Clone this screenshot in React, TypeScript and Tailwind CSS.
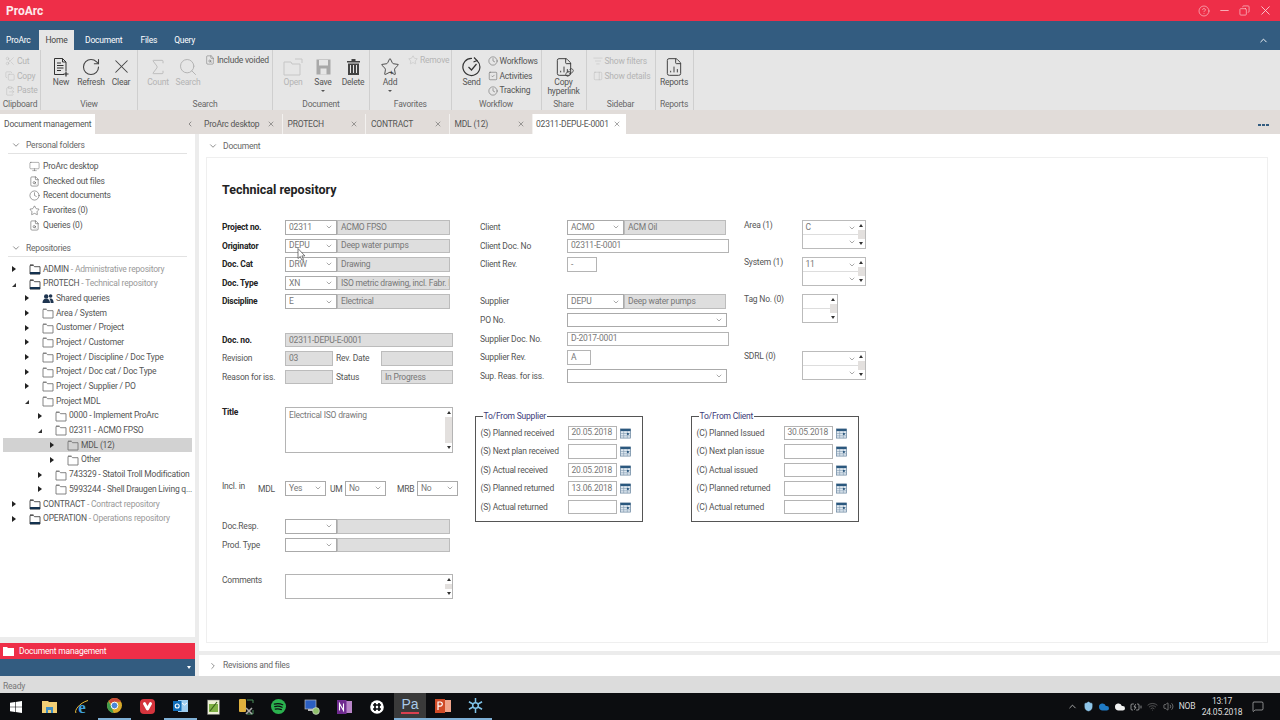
import type { ReactNode } from "react";
import {
  Scissors, Copy, ClipboardPaste, RotateCw, X, Sigma, Search,
  ChevronDown, ChevronRight, ChevronUp, ChevronLeft, Minus, CircleHelp, SquareCheck, Monitor,
  FileSearch, Clock, Link, ListFilter, PanelRight, FileChartColumn, Star,
  Wifi, Volume2, MessageSquare, Cloud, BatteryCharging, Shield,
} from "lucide-react";

function Group({ className, label, children }: { className: string; label: string; children: ReactNode }) {
  return (
    <div className={`flex h-full shrink-0 flex-col border-r border-[#cfcfcf] ${className}`}>
      <div className="flex flex-1 items-start">{children}</div>
      <div className="h-[11px] whitespace-nowrap text-center text-[8.5px] leading-[10px] text-[#666]">{label}</div>
    </div>
  );
}

function BigBtn({ icon, label, off, arrow }: { icon: ReactNode; label: string; off?: boolean; arrow?: boolean }) {
  return (
    <div className={`flex w-[30px] shrink-0 flex-col items-center pt-[6px] text-[8.5px] leading-[9px] ${off ? "text-[#b4b4b4]" : "text-[#555]"}`}>
      <div className="flex h-[21px] items-center justify-center">{icon}</div>
      <div className="mt-[1px] whitespace-nowrap">{label}</div>
      {arrow && <div className="mt-[3px] h-0 w-0 border-x-[2px] border-t-[2px] border-x-transparent border-t-[#555]" />}
    </div>
  );
}

function SmallBtn({ icon, label, off }: { icon: ReactNode; label: string; off?: boolean }) {
  return (
    <div className={`flex h-[14.7px] items-center gap-[2px] whitespace-nowrap text-[8.5px] ${off ? "text-[#b4b4b4]" : "text-[#555]"}`}>
      {icon}
      {label}
    </div>
  );
}

function FolderIcon({ repo }: { repo?: boolean }) {
  return (
    <svg width="12" height="12" viewBox="0 0 12 12" className="shrink-0">
      <path d="M1 2.5h3.5l1 1.2H11V11H1z" fill="none" stroke={repo ? "#444" : "#777"} strokeWidth="0.9" />
      <path d="M1 1.5h3.5" stroke={repo ? "#444" : "#999"} strokeWidth="0.6" />
      {repo && <rect x="1" y="9" width="10" height="2.2" fill="#14324f" />}
    </svg>
  );
}

function UsersIcon() {
  return (
    <svg width="12" height="11" viewBox="0 0 12 11" fill="#1f3550">
      <circle cx="4.2" cy="3.4" r="2.2" />
      <circle cx="8.6" cy="3" r="1.8" />
      <path d="M0.5 10c0-3 1.5-4.5 3.7-4.5S8 7 8 10zM8.6 10h3c0-2.8-1-4.5-3-4.5-.5 0-.9.1-1.3.3 1 .9 1.3 2.4 1.3 4.2z" />
    </svg>
  );
}

const trees1 = [
  { label: "ProArc desktop", icon: <Monitor size={11} strokeWidth={1} color="#555" /> },
  { label: "Checked out files", icon: <FileSearch size={11} strokeWidth={1.1} color="#444" /> },
  { label: "Recent documents", icon: <Clock size={11} strokeWidth={1.1} color="#444" /> },
  { label: "Favorites (0)", icon: <Star size={11} strokeWidth={1.1} color="#444" /> },
  { label: "Queries (0)", icon: <FileSearch size={11} strokeWidth={1.1} color="#444" /> },
];

type Node = { lv: 0 | 1 | 2 | 3; open?: boolean; label: string; sub?: string; sel?: boolean; users?: boolean };

const repoTree: Node[] = [
  { lv: 0, label: "ADMIN", sub: " - Administrative repository" },
  { lv: 0, open: true, label: "PROTECH", sub: " - Technical repository" },
  { lv: 1, label: "Shared queries", users: true },
  { lv: 1, label: "Area / System" },
  { lv: 1, label: "Customer / Project" },
  { lv: 1, label: "Project / Customer" },
  { lv: 1, label: "Project / Discipline / Doc Type" },
  { lv: 1, label: "Project / Doc cat / Doc Type" },
  { lv: 1, label: "Project / Supplier / PO" },
  { lv: 1, open: true, label: "Project MDL" },
  { lv: 2, label: "0000 - Implement ProArc" },
  { lv: 2, open: true, label: "02311 - ACMO FPSO" },
  { lv: 3, label: "MDL (12)", sel: true },
  { lv: 3, label: "Other" },
  { lv: 2, label: "743329 - Statoil Troll Modification" },
  { lv: 2, label: "5993244 - Shell Draugen Living q..." },
  { lv: 0, label: "CONTRACT", sub: " - Contract repository" },
  { lv: 0, label: "OPERATION", sub: " - Operations repository" },
];

const indent = ["pl-[12px]", "pl-[25px]", "pl-[38px]", "pl-[50px]"];

function TreeRow({ node }: { node: Node }) {
  return (
    <div className={`flex h-[14.7px] items-center whitespace-nowrap text-[8.5px] text-[#555] ${indent[node.lv]} ${node.sel ? "mx-[3px] bg-[#d2d2d2]" : ""}`}>
      <span className={`flex w-[17px] shrink-0 ${node.sel ? "-ml-[3px]" : ""}`}>
        {node.open ? (
          <span className="mt-[2px] h-0 w-0 border-b-[4px] border-l-[4px] border-b-[#333] border-l-transparent" />
        ) : (
          <span className="h-0 w-0 border-y-[3px] border-l-[4px] border-y-transparent border-l-[#222]" />
        )}
      </span>
      <span className="mr-[2px] flex w-[12px] shrink-0">
        {node.users ? <UsersIcon /> : <FolderIcon repo={node.lv === 0} />}
      </span>
      <span>{node.label}</span>
      {node.sub && <span className="whitespace-pre text-[#999]">{node.sub}</span>}
    </div>
  );
}

function SectionHead({ label }: { label: string }) {
  return (
    <div className="mx-[8px] flex h-[20px] items-center gap-[5px] border-b border-[#e2e2e2] pl-[3px] pt-[3px] text-[8.5px] text-[#666]">
      <ChevronDown size={10} strokeWidth={1.4} color="#444" />
      {label}
    </div>
  );
}

function Sidebar() {
  return (
    <div className="flex w-[195px] shrink-0 flex-col bg-white">
      <SectionHead label="Personal folders" />
      <div className="flex-col pt-[5px]">
        {trees1.map((t) => (
          <div key={t.label} className="flex h-[14.7px] items-center gap-[3px] pl-[29px] text-[8.5px] text-[#555]">
            <span className="flex w-[11px] shrink-0">{t.icon}</span>
            {t.label}
          </div>
        ))}
      </div>
      <div className="h-[4.5px]" />
      <SectionHead label="Repositories" />
      <div className="flex-1 pt-[4.6px]">
        {repoTree.map((n) => (
          <TreeRow key={n.label} node={n} />
        ))}
      </div>
      <div className="h-[6px] bg-[#ececec]" />
      <div className="flex h-[16px] items-center gap-[5px] bg-[#ee2e48] pl-[3px] text-[8.5px] text-white">
        <svg width="11" height="9" viewBox="0 0 11 9"><path d="M0 0h4l1 1h6v8H0z" fill="#fff" /></svg>
        Document management
      </div>
      <div className="flex h-[17px] items-center justify-end bg-[#335c80] pr-[4px]">
        <span className="h-0 w-0 border-x-[2.5px] border-t-[3px] border-x-transparent border-t-white" />
      </div>
    </div>
  );
}

function Combo({ value, className }: { value?: string; className: string }) {
  return (
    <div className={`flex h-[14.5px] shrink-0 items-center justify-between border border-[#aaa] bg-white pl-[3px] pr-[3px] text-[8.5px] text-[#777] ${className}`}>
      <span>{value}</span>
      <ChevronDown size={8} strokeWidth={1.5} color="#555" />
    </div>
  );
}

function GrayBox({ value, className }: { value?: string; className: string }) {
  return (
    <div className={`flex h-[14.5px] shrink-0 items-center overflow-hidden whitespace-nowrap border border-[#bcbcbc] bg-[#dedede] pl-[3px] text-[8.5px] text-[#777] ${className}`}>
      {value}
    </div>
  );
}

function TextBox({ value, className }: { value?: string; className: string }) {
  return (
    <div className={`flex h-[14.5px] shrink-0 items-center border border-[#b4b4b4] bg-white pl-[3px] text-[8.5px] text-[#777] ${className}`}>
      {value}
    </div>
  );
}

function Label({ children, bold, className = "w-[63px]" }: { children: ReactNode; bold?: boolean; className?: string }) {
  return (
    <div className={`shrink-0 whitespace-nowrap text-[8.5px] leading-[14px] ${bold ? "font-bold text-[#222]" : "text-[#555]"} ${className}`}>
      {children}
    </div>
  );
}

function Row({ children }: { children: ReactNode }) {
  return <div className="flex h-[18.6px] items-start">{children}</div>;
}

function Spin() {
  return (
    <div className="flex w-[7px] shrink-0 flex-col items-center justify-between bg-[#e3e0de]">
      <div className="flex h-[9px] w-full items-center justify-center bg-white">
        <span className="h-0 w-0 border-x-[2px] border-b-[3px] border-x-transparent border-b-[#333]" />
      </div>
      <div className="flex h-[9px] w-full items-center justify-center bg-white">
        <span className="h-0 w-0 border-x-[2px] border-t-[3px] border-x-transparent border-t-[#333]" />
      </div>
    </div>
  );
}

function ListBox({ value, label, plain, className }: { value?: string; label: string; plain?: boolean; className: string }) {
  return (
    <div className={`flex items-start ${className}`}>
      <Label className="w-[57.5px] -translate-y-[2px]">{label}</Label>
      <div className={`flex h-[29px] border border-[#bbb] bg-white ${plain ? "w-[36px]" : "w-[64px]"}`}>
        <div className="flex flex-1 flex-col text-[8.5px] text-[#777]">
          <div className="flex flex-1 items-center justify-between border-b border-[#ddd] pl-[3px] pr-[2px]">
            <span>{value}</span>
            {!plain && <ChevronDown size={8} strokeWidth={1.5} color="#555" />}
          </div>
          <div className="flex flex-1 items-center justify-end pr-[2px]">
            {!plain && <ChevronDown size={8} strokeWidth={1.5} color="#555" />}
          </div>
        </div>
        <Spin />
      </div>
    </div>
  );
}

function CalendarIcon() {
  return (
    <svg width="11" height="11" viewBox="0 0 12 11" className="shrink-0">
      <rect x="0.5" y="0.5" width="11" height="10" fill="#dfe8f0" stroke="#6c87a0" strokeWidth="0.8" />
      <rect x="0.5" y="0.5" width="11" height="2.4" fill="#2b587e" />
      <path d="M4 3v7.5M8 3v7.5M.5 5.5h11M.5 8h11" stroke="#7d97ad" strokeWidth="0.6" />
      <rect x="7.6" y="5" width="2" height="2" fill="#2b587e" />
    </svg>
  );
}

function DateGroup({ title, rows }: { title: string; rows: [string, string][] }) {
  return (
    <fieldset className="h-[110px] w-[168px] shrink-0 border border-[#555] pl-[4.5px]">
      <legend className="ml-[2px] px-[1px] text-[8.5px] leading-[9px] text-[#3d3a78]">{title}</legend>
      <div className="pt-[5px]">
        {rows.map(([label, value]) => (
          <div key={label} className="flex h-[18.6px] items-start">
            <Label className="w-[87px]">{label}</Label>
            <TextBox value={value} className="w-[49px]" />
            <span className="ml-[3.5px] mt-[2px] flex"><CalendarIcon /></span>
          </div>
        ))}
      </div>
    </fieldset>
  );
}

function Form() {
  return (
    <div className="flex pl-[15px]">
      <div className="w-[253px] shrink-0">
        <Row><Label bold>Project no.</Label><Combo value="02311" className="w-[52px]" /><GrayBox value="ACMO FPSO" className="w-[113px]" /></Row>
        <Row><Label bold>Originator</Label><Combo value="DEPU" className="w-[52px]" /><GrayBox value="Deep water pumps" className="w-[113px]" /></Row>
        <Row><Label bold>Doc. Cat</Label><Combo value="DRW" className="w-[52px]" /><GrayBox value="Drawing" className="w-[113px]" /></Row>
        <Row><Label bold>Doc. Type</Label><Combo value="XN" className="w-[52px]" /><GrayBox value="ISO metric drawing, incl. Fabr. I" className="w-[113px]" /></Row>
        <Row><Label bold>Discipline</Label><Combo value="E" className="w-[52px]" /><GrayBox value="Electrical" className="w-[113px]" /></Row>
        <div className="h-[19.7px]" />
        <Row><Label bold>Doc. no.</Label><GrayBox value="02311-DEPU-E-0001" className="w-[168px]" /></Row>
        <Row>
          <Label>Revision</Label>
          <GrayBox value="03" className="w-[48px]" />
          <Label className="w-[48px] pl-[3px]">Rev. Date</Label>
          <GrayBox className="w-[72px]" />
        </Row>
        <Row>
          <Label>Reason for iss.</Label>
          <GrayBox className="w-[48px]" />
          <Label className="w-[48px] pl-[3px]">Status</Label>
          <GrayBox value="In Progress" className="w-[72px]" />
        </Row>
        <div className="h-[18.2px]" />
        <div className="flex h-[46px] items-start">
          <Label bold className="w-[63px] -translate-y-[2px]">Title</Label>
          <div className="flex h-[46px] w-[168px] shrink-0 border border-[#b4b4b4] bg-white">
            <div className="flex-1 pl-[3px] pt-[1px] text-[8.5px] text-[#777]">Electrical ISO drawing</div>
            <Spin />
          </div>
        </div>
        <div className="flex h-[43px] items-end text-[8.5px]">
          <Label className="w-[36px] -translate-y-[3px]">Incl. in</Label>
          <Label className="w-[27px]">MDL</Label>
          <Combo value="Yes" className="w-[41px]" />
          <Label className="w-[19px] pl-[4px]">UM</Label>
          <Combo value="No" className="w-[41px]" />
          <Label className="w-[31px] pl-[11px]">MRB</Label>
          <Combo value="No" className="w-[41px]" />
        </div>
        <div className="h-[23.5px]" />
        <Row><Label>Doc.Resp.</Label><Combo className="w-[52px]" /><GrayBox className="w-[113px]" /></Row>
        <Row><Label>Prod. Type</Label><Combo className="w-[52px]" /><GrayBox className="w-[113px]" /></Row>
        <div className="h-[18px]" />
        <div className="flex items-start">
          <Label className="w-[63px] -translate-y-[1px]">Comments</Label>
          <div className="flex h-[25px] w-[168px] shrink-0 border border-[#b4b4b4] bg-white">
            <div className="flex-1" />
            <Spin />
          </div>
        </div>
      </div>
      <div className="flex flex-col">
        <div className="flex h-[168.5px]">
          <div className="w-[269px] shrink-0 pl-[5px]">
            <Row><Label className="w-[87px]">Client</Label><Combo value="ACMO" className="w-[57px]" /><GrayBox value="ACM Oil" className="w-[102px]" /></Row>
            <Row><Label className="w-[87px]">Client Doc. No</Label><TextBox value="02311-E-0001" className="w-[162px]" /></Row>
            <Row><Label className="w-[87px]">Client Rev.</Label><TextBox value="-" className="w-[30px]" /></Row>
            <div className="h-[18.6px]" />
            <Row><Label className="w-[87px]">Supplier</Label><Combo value="DEPU" className="w-[57px]" /><GrayBox value="Deep water pumps" className="w-[102px]" /></Row>
            <Row><Label className="w-[87px]">PO No.</Label><Combo className="w-[160px]" /></Row>
            <Row><Label className="w-[87px]">Supplier Doc. No.</Label><TextBox value="D-2017-0001" className="w-[162px]" /></Row>
            <Row><Label className="w-[87px]">Supplier Rev.</Label><TextBox value="A" className="w-[24px]" /></Row>
            <Row><Label className="w-[87px]">Sup. Reas. for iss.</Label><Combo className="w-[160px]" /></Row>
          </div>
          <div className="flex flex-col">
            <ListBox label="Area (1)" value="C" className="" />
            <ListBox label="System (1)" value="11" className="mt-[8px]" />
            <ListBox label="Tag No. (0)" plain className="mt-[8px]" />
            <ListBox label="SDRL (0)" className="mt-[28px]" />
          </div>
        </div>
        <div className="mt-[23px] flex gap-[48px]">
          <DateGroup
            title="To/From Supplier"
            rows={[
              ["(S) Planned received", "20.05.2018"],
              ["(S) Next plan received", ""],
              ["(S) Actual received", "20.05.2018"],
              ["(S) Planned returned", "13.06.2018"],
              ["(S) Actual returned", ""],
            ]}
          />
          <DateGroup
            title="To/From Client"
            rows={[
              ["(C) Planned Issued", "30.05.2018"],
              ["(C) Next plan issue", ""],
              ["(C) Actual issued", ""],
              ["(C) Planned returned", ""],
              ["(C) Actual returned", ""],
            ]}
          />
        </div>
      </div>
    </div>
  );
}

function Ribbon() {
  const big = 20;
  return (
    <div className="flex h-[60px] shrink-0 bg-[#e6e6e6]">
      <Group className="w-[41px]" label="Clipboard">
        <div className="pl-[5px] pt-[4px]">
          <SmallBtn off icon={<Scissors size={10} strokeWidth={1} />} label="Cut" />
          <SmallBtn off icon={<Copy size={10} strokeWidth={1} />} label="Copy" />
          <SmallBtn off icon={<ClipboardPaste size={10} strokeWidth={1} />} label="Paste" />
        </div>
      </Group>
      <Group className="w-[97px]" label="View">
        <div className="flex pl-[5px]">
          <BigBtn
            icon={
              <svg width="16" height="20" viewBox="0 0 16 20" fill="none" stroke="#333" strokeWidth="1">
                <path d="M11 17.5H1.5v-16h8l3.5 3.5v9" />
                <path d="M9.5 1.5V5H13M4 6h4M4 8.5h6.5M4 11h6.5M4 13.5h4" />
                <path d="M13 14.5v5M10.5 17h5" strokeWidth="1.2" />
              </svg>
            }
            label="New"
          />
          <BigBtn icon={<RotateCw size={big} strokeWidth={1.3} color="#444" />} label="Refresh" />
          <BigBtn icon={<X size={big + 3} strokeWidth={1.1} color="#444" />} label="Clear" />
        </div>
      </Group>
      <Group className="w-[135px]" label="Search">
        <div className="flex pl-[5px]">
          <BigBtn off icon={<Sigma size={big} strokeWidth={1} />} label="Count" />
          <BigBtn off icon={<Search size={big} strokeWidth={1.2} />} label="Search" />
          <div className="pl-[2px] pt-[3px]">
            <SmallBtn icon={<FileSearch size={10} strokeWidth={1} />} label="Include voided" />
          </div>
        </div>
      </Group>
      <Group className="w-[97px]" label="Document">
        <div className="flex pl-[5px]">
          <BigBtn off icon={<svg width="20" height="18" viewBox="0 0 20 18" fill="none" stroke="#c6c6c6" strokeWidth="1"><path d="M1 4h7l1 2h8v11H1zM12 1h7v4" /></svg>} label="Open" />
          <BigBtn
            icon={
              <svg width="15" height="16" viewBox="0 0 15 16">
                <rect x="0.5" y="0.5" width="14" height="15" fill="#a8a8a8" />
                <rect x="3" y="1" width="9" height="5.5" fill="#e6e6e6" />
                <rect x="4.5" y="9.5" width="6" height="6" fill="#e6e6e6" />
              </svg>
            }
            label="Save"
            arrow
          />
          <BigBtn
            icon={
              <svg width="13" height="16" viewBox="0 0 13 16">
                <path d="M0 2h13v1.5H0zM4.5 0h4v2h-4z" fill="#444" />
                <path d="M1 4.5h11V16H1z" fill="#444" />
                <path d="M3.5 6v8M6.5 6v8M9.5 6v8" stroke="#e6e6e6" strokeWidth="1" />
              </svg>
            }
            label="Delete"
          />
        </div>
      </Group>
      <Group className="w-[81.5px]" label="Favorites">
        <div className="flex pl-[5px]">
          <BigBtn
            icon={
              <span className="relative flex">
                <Star size={big} strokeWidth={1} color="#333" />
                <span className="absolute bottom-0 left-[9px] text-[8px] leading-[8px] text-[#333]">+</span>
              </span>
            }
            label="Add"
            arrow
          />
          <div className="pl-[3px] pt-[3px]">
            <SmallBtn off icon={<Star size={10} strokeWidth={1} />} label="Remove" />
          </div>
        </div>
      </Group>
      <Group className="w-[90px]" label="Workflow">
        <div className="flex pl-[5px]">
          <BigBtn
            icon={
              <svg width="20" height="20" viewBox="0 0 20 20" fill="none" stroke="#333" strokeWidth="1.2">
                <path d="M15 3.6A8.5 8.5 0 1 1 10 1.5" />
                <path d="M12 0.5l3 3-3.5 1.5" />
                <path d="M6.5 10l3 3 5-6" />
              </svg>
            }
            label="Send"
          />
          <div className="pl-[1px] pt-[4px]">
            <SmallBtn icon={<Clock size={10} strokeWidth={1.2} />} label="Workflows" />
            <SmallBtn icon={<SquareCheck size={10} strokeWidth={1.2} />} label="Activities" />
            <SmallBtn icon={<Clock size={10} strokeWidth={1.2} />} label="Tracking" />
          </div>
        </div>
      </Group>
      <Group className="w-[45px]" label="Share">
        <div className="flex w-full flex-col items-center pt-[6px] text-[8.5px] leading-[9px] text-[#555]">
          <div className="relative flex h-[21px] items-center">
            <FileChartColumn size={big} strokeWidth={1.1} color="#333" />
            <Link size={9} strokeWidth={2} color="#333" className="absolute bottom-0 right-0" />
          </div>
          <div className="mt-[1px] text-center">Copy<br />hyperlink</div>
        </div>
      </Group>
      <Group className="w-[69px]" label="Sidebar">
        <div className="pl-[6px] pt-[4px]">
          <SmallBtn off icon={<ListFilter size={10} strokeWidth={1} />} label="Show filters" />
          <SmallBtn off icon={<PanelRight size={10} strokeWidth={1} />} label="Show details" />
        </div>
      </Group>
      <Group className="w-[38px]" label="Reports">
        <div className="flex w-full justify-center">
          <BigBtn icon={<FileChartColumn size={big} strokeWidth={1.2} color="#444" />} label="Reports" />
        </div>
      </Group>
    </div>
  );
}

function DocTab({ label, active }: { label: string; active?: boolean }) {
  if (active) {
    return (
      <div className="mt-[4px] flex h-[20px] w-[93px] items-center justify-between bg-white pl-[3px] pr-[5px] text-[8.5px] text-[#555]">
        {label}
        <X size={8} strokeWidth={1.4} color="#444" />
      </div>
    );
  }
  return (
    <div className="mt-[4px] flex h-[20px] w-[83.5px] items-center justify-between border-r border-[#f3f1ef] pl-[5px] pr-[7px] text-[8.5px] text-[#555]">
      {label}
      <X size={8} strokeWidth={1.4} color="#444" />
    </div>
  );
}

function TaskCell({ children, bar, active }: { children: ReactNode; bar?: boolean; active?: boolean }) {
  return (
    <div className={`flex h-full w-[32.8px] shrink-0 items-center justify-center ${bar ? "border-b-2 border-[#7fb0d6]" : ""} ${active ? "bg-[#3a3a3a]" : ""}`}>
      {children}
    </div>
  );
}

function Taskbar() {
  return (
    <div className="flex h-[27px] shrink-0 items-center bg-[#0c0d10]">
      <TaskCell>
        <svg width="12" height="12" viewBox="0 0 12 12" fill="#fff"><path d="M0 1.7l5-.7v4.7H0zM5.6.9L12 0v5.7H5.6zM0 6.3h5V11l-5-.7zM5.6 6.3H12V12l-6.4-.9z" /></svg>
      </TaskCell>
      <TaskCell>
        <svg width="15" height="13" viewBox="0 0 15 13"><path d="M0 1h6l1 1h8v11H0z" fill="#f2cf75" /><rect x="4" y="7" width="7" height="6" fill="#3f8fc4" /><rect x="6" y="10" width="3" height="3" fill="#f2cf75" /></svg>
      </TaskCell>
      <TaskCell>
        <svg width="16" height="16" viewBox="0 0 16 16">
          <text x="8" y="13.5" textAnchor="middle" fontSize="17" fontWeight="700" fontFamily="'Liberation Serif', serif" fill="#3fa0dc">e</text>
          <path d="M2 14C0 12 5 4 14 1.5" fill="none" stroke="#e5b93a" strokeWidth="1" />
        </svg>
      </TaskCell>
      <TaskCell bar>
        <svg width="15" height="15" viewBox="0 0 16 16">
          <circle cx="8" cy="8" r="8" fill="#d8a92a" />
          <path d="M8 0a8 8 0 0 1 7 4H8a4 4 0 0 0-3.6 2.2L2 2.8A8 8 0 0 1 8 0z" fill="#c9463a" />
          <path d="M1.5 3.5L5 9.5 7 16A8 8 0 0 1 1.5 3.5z" fill="#3f9b4f" />
          <circle cx="8" cy="8" r="3.6" fill="#4a86d8" stroke="#fff" strokeWidth="1" />
        </svg>
      </TaskCell>
      <TaskCell>
        <div className="flex h-[15px] w-[15px] items-center justify-center rounded-[4px] bg-[#d5343d]">
          <svg width="9" height="9" viewBox="0 0 9 9"><path d="M0 1.5a1.5 1.5 0 0 1 2.7-.8L4.5 4 6.3.7A1.5 1.5 0 0 1 9 1.5c0 .5-.2.8-.4 1.2L5.8 7.8a1.5 1.5 0 0 1-2.6 0L.4 2.7C.2 2.3 0 2 0 1.5z" fill="#fff" /></svg>
        </div>
      </TaskCell>
      <TaskCell bar>
        <svg width="15" height="14" viewBox="0 0 15 14"><rect x="5" y="1" width="10" height="12" fill="#9dcdf0" /><rect x="0" y="2" width="8.5" height="10" fill="#0f6cb8" /><circle cx="4.2" cy="7" r="2" fill="none" stroke="#fff" strokeWidth="1.1" /><path d="M9 4l2.5 2L14 4" stroke="#fff" fill="none" /></svg>
      </TaskCell>
      <TaskCell>
        <svg width="13" height="16" viewBox="0 0 13 16"><rect x="0.5" y="1" width="12" height="14.5" fill="#eef0d8" stroke="#666" strokeWidth="0.5" /><rect x="2" y="5" width="9" height="8" fill="#7fb045" /><path d="M3 12l7-9" stroke="#3a5f1a" strokeWidth="1.2" /></svg>
      </TaskCell>
      <TaskCell>
        <svg width="16" height="16" viewBox="0 0 16 16"><rect x="1" y="0" width="7" height="13" rx="1" fill="#e0b13e" /><path d="M9 1h6v3M15 11v4H9" stroke="#4a8f5a" fill="none" /><path d="M8 9l6 6M14 9l-6 6" stroke="#aaa" strokeWidth="1.6" /></svg>
      </TaskCell>
      <TaskCell>
        <svg width="15" height="15" viewBox="0 0 16 16"><circle cx="8" cy="8" r="8" fill="#2bb24f" /><path d="M3.5 5.5c3-1 6-.8 9 .6M4 8.2c2.6-.8 5.3-.6 7.8.6M4.5 10.8c2.2-.6 4.4-.5 6.6.5" stroke="#0c0d10" strokeWidth="1.3" fill="none" strokeLinecap="round" /></svg>
      </TaskCell>
      <TaskCell>
        <svg width="16" height="16" viewBox="0 0 16 16"><rect x="1" y="1" width="11" height="9" fill="#2b5fc2" stroke="#bbb" strokeWidth="0.7" /><rect x="4" y="10" width="5" height="2" fill="#bbb" /><circle cx="12" cy="12" r="3.4" fill="#8fbf6a" stroke="#ddd" strokeWidth="0.6" /></svg>
      </TaskCell>
      <TaskCell>
        <svg width="15" height="14" viewBox="0 0 15 14"><rect x="6" y="1" width="9" height="12" fill="#b884c8" /><rect x="0" y="0" width="9.5" height="14" fill="#6f2a8f" /><path d="M2.5 10.5v-7l4 7v-7" stroke="#fff" fill="none" strokeWidth="1.1" /></svg>
      </TaskCell>
      <TaskCell>
        <svg width="14" height="14" viewBox="0 0 14 14"><circle cx="7" cy="7" r="6.8" fill="#fff" /><path d="M5 3v8M9 3v8M3 5h8M3 9h8" stroke="#0c0d10" strokeWidth="1.7" /></svg>
      </TaskCell>
      <TaskCell active bar>
        <span className="border-b-2 border-[#d8404f] text-[14px] leading-[15px] tracking-normal text-[#a9c9e6] [font-family:'Liberation_Sans',sans-serif]">Pa</span>
      </TaskCell>
      <TaskCell bar>
        <svg width="16" height="14" viewBox="0 0 16 14"><rect x="6" y="1" width="10" height="12" fill="#f0a48a" /><rect x="0" y="0" width="10" height="14" fill="#cf4a26" /><path d="M3 11V3h2.2a2 2 0 0 1 0 4.2H3" stroke="#fff" fill="none" strokeWidth="1.2" /></svg>
      </TaskCell>
      <TaskCell bar>
        <svg width="15" height="15" viewBox="0 0 16 16" fill="none" stroke="#7fc3e8" strokeWidth="1.6"><path d="M8 0v16M1 4l14 8M15 4L1 12" /><circle cx="8" cy="8" r="3" fill="#0c0d10" /></svg>
      </TaskCell>
      <div className="ml-auto flex h-full items-center text-white">
        <div className="flex w-[16px] justify-center"><ChevronUp size={11} strokeWidth={1.6} color="#ddd" /></div>
        <div className="flex w-[16px] justify-center"><Shield size={11} fill="#8ec5e8" strokeWidth={1} color="#8ec5e8" /></div>
        <div className="flex w-[16px] justify-center"><Cloud size={12} fill="#1f7ac4" strokeWidth={0} /></div>
        <div className="flex w-[16px] justify-center"><Cloud size={12} fill="#f2f2f2" strokeWidth={0} /></div>
        <div className="flex w-[16px] justify-center"><BatteryCharging size={12} strokeWidth={1.2} color="#ddd" /></div>
        <div className="flex w-[16px] justify-center"><Wifi size={11} strokeWidth={1.2} color="#888" /></div>
        <div className="flex w-[16px] justify-center"><Volume2 size={11} strokeWidth={1.2} color="#bbb" /></div>
        <div className="w-[22px] text-center text-[8.5px] text-[#ddd]">NOB</div>
        <div className="w-[48px] text-center text-[8.5px] leading-[11px] text-[#ddd]">13:17<br />24.05.2018</div>
        <div className="ml-[6px] mr-[16px] flex w-[12px] justify-center"><MessageSquare size={13} strokeWidth={1.1} color="#eee" /></div>
      </div>
    </div>
  );
}

export default function App() {
  return (
    <div className="relative flex h-[720px] w-[1280px] flex-col overflow-hidden bg-white font-['Roboto',sans-serif] tracking-[-0.2px]">
      {/* title bar */}
      <div className="flex h-[21px] shrink-0 items-center bg-[#ee2e48] pl-[6px] text-white">
        <span className="text-[12px] font-bold tracking-normal opacity-90">ProArc</span>
        <div className="ml-auto flex items-center gap-[8px] pr-[7px] text-[#fbd3d9]">
          <CircleHelp size={12} strokeWidth={1.2} />
          <Minus size={13} strokeWidth={1.4} />
          <Copy size={11} strokeWidth={1.4} className="-scale-x-100" />
          <X size={15} strokeWidth={1.4} />
        </div>
      </div>
      {/* ribbon tabs */}
      <div className="flex h-[29px] shrink-0 items-end bg-[#335c80] text-[8.5px] text-white">
        <div className="flex h-[20px] w-[39px] items-center pl-[6px]">ProArc</div>
        <div className="flex h-[20px] w-[35px] items-center justify-center bg-[#e6e6e6] text-[#444]">Home</div>
        <div className="flex h-[20px] items-center pl-[11px]">Document</div>
        <div className="flex h-[20px] items-center pl-[18px]">Files</div>
        <div className="flex h-[20px] items-center pl-[17px]">Query</div>
        <div className="ml-auto flex h-[20px] items-center pr-[11px]"><ChevronUp size={11} strokeWidth={2} /></div>
      </div>
      <Ribbon />
      {/* tab strip */}
      <div className="flex h-[24px] shrink-0 bg-[#e1dcd9]">
        <div className="flex w-[199px] shrink-0 items-end">
          <div className="flex h-[20px] w-[95px] items-center whitespace-nowrap bg-white pl-[4px] text-[8.5px] text-[#555]">Document management</div>
          <div className="flex h-[20px] flex-1 items-center justify-end pr-[5px]"><ChevronLeft size={8} strokeWidth={1.6} color="#444" /></div>
        </div>
        <DocTab label="ProArc desktop" />
        <DocTab label="PROTECH" />
        <DocTab label="CONTRACT" />
        <DocTab label="MDL (12)" />
        <DocTab label="02311-DEPU-E-0001" active />
        <div className="ml-auto flex items-center gap-[1px] pr-[11px] pt-[6px]">
          <span className="h-[2px] w-[3px] bg-[#335c80]" />
          <span className="h-[2px] w-[3px] bg-[#335c80]" />
          <span className="h-[2px] w-[3px] bg-[#335c80]" />
        </div>
      </div>
      {/* main */}
      <div className="flex min-h-0 flex-1">
        <Sidebar />
        <div className="w-[4px] shrink-0 bg-[#ececec]" />
        <div className="flex min-w-0 flex-1 flex-col bg-white">
          <div className="flex h-[23px] shrink-0 items-center gap-[5px] pl-[9px] pt-[1px] text-[8.5px] text-[#666]">
            <ChevronDown size={10} strokeWidth={1.4} color="#444" />
            Document
          </div>
          <div className="ml-[7px] mr-[12px] h-[486px] shrink-0 border border-[#efefef]">
            <div className="pl-[15px] pt-[24px] text-[12.5px] font-bold leading-[15px] tracking-normal text-[#222]">Technical repository</div>
            <div className="pt-[23px]">
              <Form />
            </div>
          </div>
          <div className="mt-[8px] h-[4px] shrink-0 bg-[#ececec]" />
          <div className="flex flex-1 items-center gap-[5px] pl-[9px] text-[8.5px] text-[#666]">
            <ChevronRight size={10} strokeWidth={1.4} color="#444" />
            Revisions and files
          </div>
        </div>
      </div>
      {/* status bar */}
      <div className="flex h-[17px] shrink-0 items-center bg-[#dcdcdc] pl-[3px] pt-[3px] text-[8.5px] text-[#777]">Ready</div>
      <Taskbar />
      {/* mouse pointer */}
      <svg width="9" height="13" viewBox="0 0 9 13" className="absolute left-[297px] top-[248px]">
        <path d="M1 0.5v10l2.3-2 1.6 3.6 1.6-.7-1.6-3.5h3z" fill="#fff" stroke="#444" strokeWidth="0.7" />
      </svg>
    </div>
  );
}
